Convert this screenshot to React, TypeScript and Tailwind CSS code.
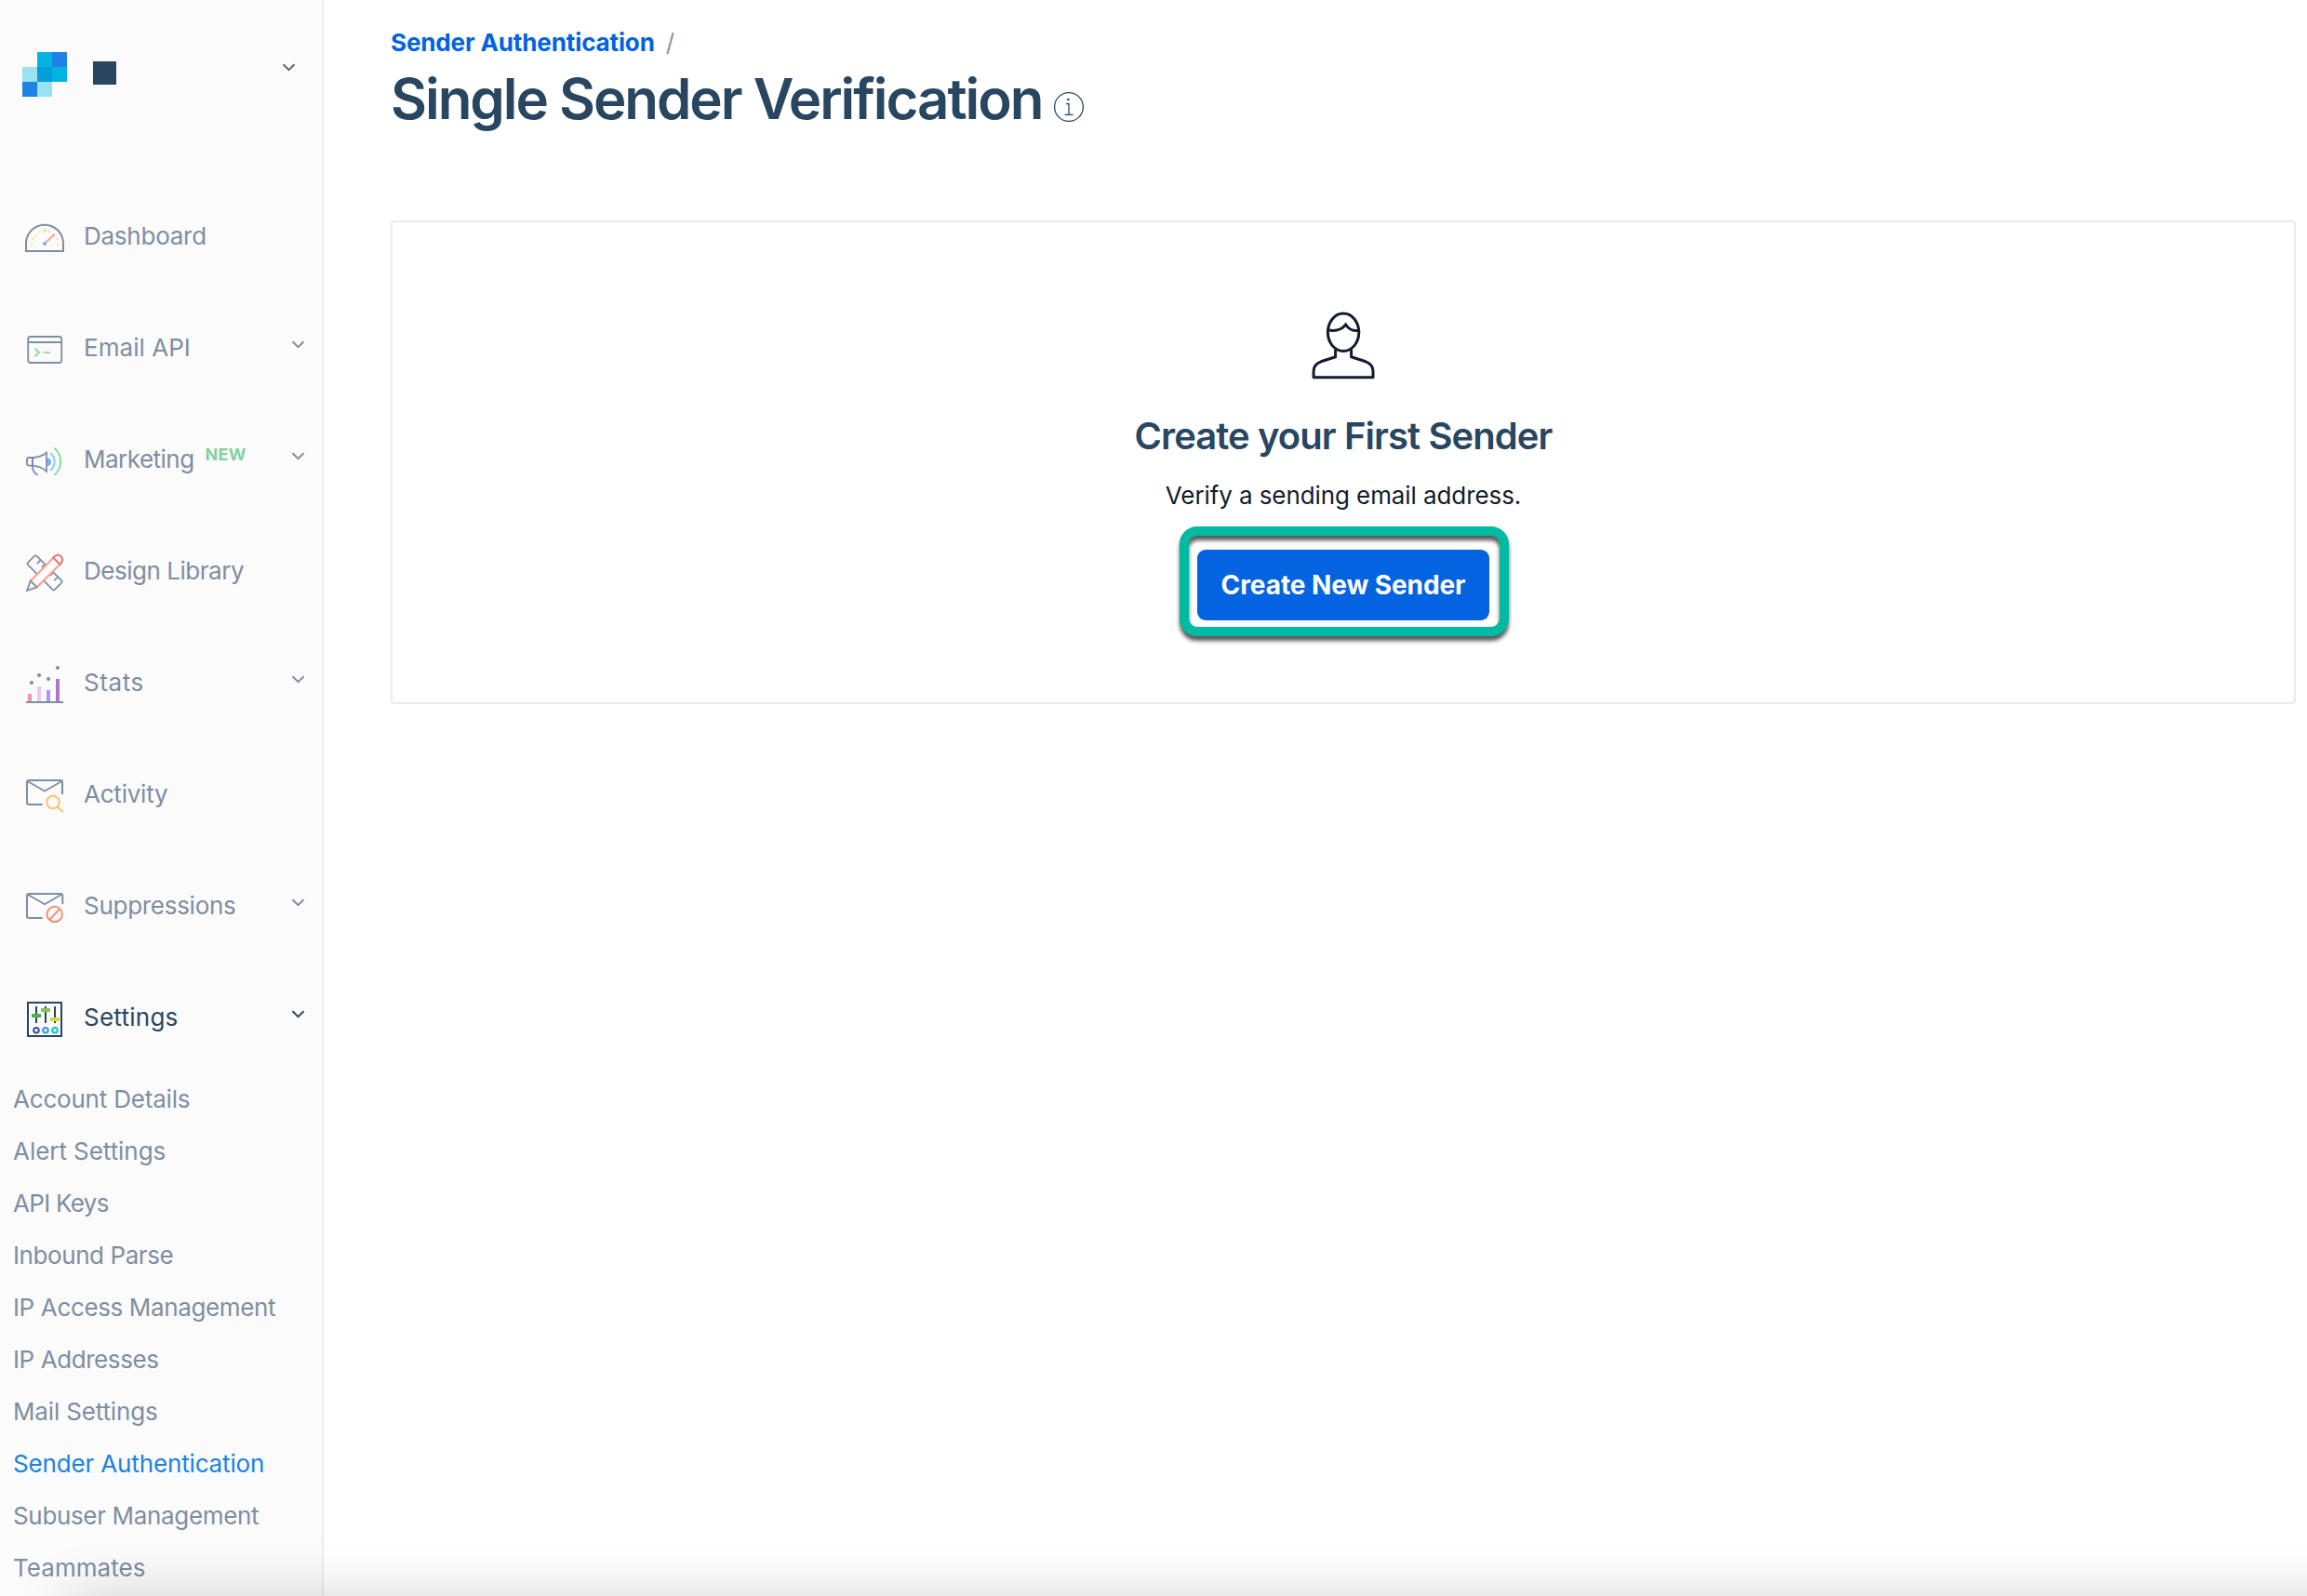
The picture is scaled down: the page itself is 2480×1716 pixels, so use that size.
import type { ReactNode } from "react";

const slate = "#7e8ea2";
const navy = "#294661";

function IconBox({ children }: { children: ReactNode }) {
  return (
    <svg className="size-12 shrink-0" viewBox="0 0 48 48" fill="none" strokeWidth="2">
      {children}
    </svg>
  );
}

function DashboardIcon() {
  return (
    <IconBox>
      <path d="M4 40V31.7A20 20 0 0 1 44 31.7V40Z" stroke={slate} />
      <g fill="#fbe38e">
        <ellipse cx="10" cy="33" rx="1.8" ry="1.1" />
        <ellipse cx="38" cy="33" rx="1.8" ry="1.1" />
        <circle cx="11" cy="27" r="1.1" />
        <circle cx="15" cy="23" r="1.1" />
        <circle cx="19" cy="19" r="1.1" />
        <circle cx="24" cy="18" r="2.1" />
        <circle cx="29" cy="19" r="1.1" />
        <circle cx="37" cy="27" r="1.1" />
      </g>
      <path d="M25.3 30.7L34.7 21.7" stroke="#ff9f88" />
      <circle cx="24" cy="32" r="2.1" fill="#72b2f4" />
    </IconBox>
  );
}

function TerminalIcon() {
  return (
    <IconBox>
      <rect x="6.2" y="12" width="36" height="28" rx="2.5" stroke={slate} strokeWidth="1.8" />
      <path d="M6 18H42" stroke={slate} />
      <path d="M13.4 24.8L18 29L13.4 33.2" stroke="#85dfa2" />
      <path d="M22.5 29H30" stroke="#b4da8d" />
    </IconBox>
  );
}

function MegaphoneIcon() {
  return (
    <IconBox>
      <path d="M11 31C11 36 12.5 39 16.8 40.6" stroke="#8f8bd0" />
      <path d="M27 23A3.7 3.7 0 0 1 27 30.4Z" fill="#72b2f4" stroke="#72b2f4" strokeWidth="1" />
      <path
        d="M11 22H7Q5 22 5 24V28.6Q5 30.6 7 30.6H11M11 22C16 22 21.5 20.3 26 16.8V36.8C21.5 32.6 16 31 11 30.6"
        stroke={slate}
        strokeWidth="1.8"
      />
      <path d="M11 22V31" stroke="#8088b6" />
      <path d="M30 17.2C36.2 21.5 36.2 31.5 30 35.8" stroke="#7dd4e8" />
      <path d="M34.3 11.8C43.4 18.8 43.4 33.8 34.3 40.8" stroke="#85dfa2" />
    </IconBox>
  );
}

function DesignIcon() {
  return (
    <IconBox>
      <path
        d="M13 7.9Q14.3 6.7 15.5 7.9L42.2 34.2Q43.3 35.4 42.2 36.6L35 43.8Q33.7 45 32.5 43.8L5.9 17.2Q4.8 16 5.9 14.9Z"
        stroke={slate}
        strokeWidth="1.7"
      />
      <path d="M19.5 12.3L15.8 16.2M24 16.8L20.8 20M32.8 25.8L29.6 29.2M38 30.6L34.2 34.2" stroke={slate} strokeWidth="1.7" />
      <path d="M8.7 34.7L33.3 9.7L40.3 16.9L15.7 41.3Z" fill="#fbfbfb" stroke="#ff9f88" />
      <path d="M8.7 34.7L5 45L15.7 41.3Z" fill="#fbfbfb" stroke={slate} strokeWidth="1.8" />
      <path d="M33.3 9.5C36 6.2 39.4 5.9 41.6 8.1C43.9 10.5 43.5 13.8 40.5 16.9Z" fill="#fbfbfb" stroke="#d57c78" />
    </IconBox>
  );
}

function StatsIcon() {
  return (
    <IconBox>
      <rect x="6" y="36" width="4" height="8" fill="#ff8fb3" />
      <rect x="16" y="28" width="4" height="16" fill="#ebc8f0" />
      <rect x="26" y="32" width="4" height="12" fill="#b093ff" />
      <rect x="36" y="20" width="4" height="24" fill="#ae78c8" />
      <rect x="4" y="44" width="40" height="2" fill={slate} />
      <g fill={slate}>
        <circle cx="10" cy="24" r="2.1" />
        <circle cx="18" cy="16" r="2.1" />
        <circle cx="28" cy="20" r="2.1" />
        <circle cx="38" cy="8" r="2.1" />
      </g>
    </IconBox>
  );
}

function ActivityIcon() {
  return (
    <IconBox>
      <path d="M21.7 35H7Q5 35 5 33V11Q5 9 7 9H41Q43 9 43 11V24" stroke={slate} />
      <path d="M5.5 10L24 20.5L42.5 10" stroke={slate} strokeWidth="1.8" />
      <circle cx="33" cy="32.4" r="6.8" stroke="#ffc070" />
      <path d="M38 37.5L43.8 43.2" stroke="#ffc070" />
    </IconBox>
  );
}

function SuppressionsIcon() {
  return (
    <IconBox>
      <path d="M21.7 37H7Q5 37 5 35V13Q5 11 7 11H41Q43.3 11 43.3 13V22" stroke={slate} />
      <path d="M5.5 11.5L24 22.2L42.5 11.5" stroke={slate} strokeWidth="1.8" />
      <circle cx="34.7" cy="33" r="8.2" stroke="#f39079" />
      <path d="M29 39L40.5 27" stroke="#f39079" />
    </IconBox>
  );
}

function SettingsIcon() {
  return (
    <IconBox>
      <rect x="6" y="8" width="36" height="36" stroke={navy} />
      <path d="M15 12V30M25 12V30M35 12V30" stroke={navy} />
      <rect x="10" y="20" width="10" height="4" fill="#4caf50" />
      <rect x="20" y="14" width="10" height="4" fill="#8bc34a" />
      <rect x="30" y="24" width="10" height="4" fill="#cddc39" />
      <circle cx="15" cy="37.7" r="2.8" stroke="#3f4aa8" />
      <circle cx="25" cy="37.7" r="2.8" stroke="#2f98f5" />
      <circle cx="35" cy="37.7" r="2.8" stroke="#12bfd6" />
    </IconBox>
  );
}

function Chevron({ className }: { className: string }) {
  return (
    <svg className={className} width="15" height="9" viewBox="0 0 15 9" fill="none" stroke="currentColor" strokeWidth="2">
      <path d="M1.5 1.2L7.5 7.2L13.5 1.2" />
    </svg>
  );
}

type NavItem = { label: string; icon: ReactNode; tracking: string; menu?: boolean; badge?: string; active?: boolean };

const nav: NavItem[] = [
  { label: "Dashboard", icon: <DashboardIcon />, tracking: "tracking-[-0.25px]" },
  { label: "Email API", icon: <TerminalIcon />, tracking: "tracking-[0.05px]", menu: true },
  { label: "Marketing", icon: <MegaphoneIcon />, tracking: "tracking-[-0.52px]", menu: true, badge: "NEW" },
  { label: "Design Library", icon: <DesignIcon />, tracking: "tracking-[-0.47px]" },
  { label: "Stats", icon: <StatsIcon />, tracking: "tracking-[0.6px]", menu: true },
  { label: "Activity", icon: <ActivityIcon />, tracking: "tracking-[-0.22px]" },
  { label: "Suppressions", icon: <SuppressionsIcon />, tracking: "tracking-[-0.28px]", menu: true },
  { label: "Settings", icon: <SettingsIcon />, tracking: "tracking-[0.25px]", menu: true, active: true },
];

const settingsLinks = [
  { label: "Account Details", tracking: "tracking-[-0.2px]" },
  { label: "Alert Settings", tracking: "tracking-[-0.05px]" },
  { label: "API Keys", tracking: "tracking-[-0.7px]" },
  { label: "Inbound Parse", tracking: "tracking-[-0.42px]" },
  { label: "IP Access Management", tracking: "tracking-[-0.36px]" },
  { label: "IP Addresses", tracking: "tracking-[-0.42px]" },
  { label: "Mail Settings", tracking: "tracking-[-0.15px]" },
  { label: "Sender Authentication", tracking: "tracking-[-0.15px]", active: true },
  { label: "Subuser Management", tracking: "tracking-[-0.34px]" },
  { label: "Teammates", tracking: "tracking-[0.05px]" },
];

function Sidebar() {
  return (
    <aside className="flex w-[348px] shrink-0 flex-col border-r-2 border-[#ebecf0] bg-[#fbfbfb] text-[26px]">
      <div className="flex h-[194px] shrink-0 items-start pt-14 pr-7 pl-6">
        <svg className="size-12" viewBox="0 0 3 3" shapeRendering="crispEdges">
          <rect x="1" width="1" height="1" fill="#05b3e3" />
          <rect x="2" width="1" height="1" fill="#1f82e5" />
          <rect y="1" width="1" height="1" fill="#9ae1f4" />
          <rect x="1" y="1" width="1" height="1" fill="#059ed9" />
          <rect x="2" y="1" width="1" height="1" fill="#05b3e3" />
          <rect y="2" width="1" height="1" fill="#1f82e5" />
          <rect x="1" y="2" width="1" height="1" fill="#9ae1f4" />
        </svg>
        <span className="mt-2.5 ml-7 size-[25px] bg-[#294661]" />
        <Chevron className="mt-3 ml-auto text-[#546b81]" />
      </div>
      <nav className="flex shrink-0 flex-col">
        {nav.map((item) => (
          <a
            key={item.label}
            className={`flex h-[120px] items-center pr-[18px] pl-6 ${item.active ? "text-[#294661]" : "text-[#7e8ea2]"}`}
          >
            {item.icon}
            <span className={`mb-px ml-[18px] ${item.tracking}`}>{item.label}</span>
            {item.badge && (
              <span className="mb-3 ml-3 text-[18px] font-bold tracking-[0.3px] text-[#86d0a0]">{item.badge}</span>
            )}
            {item.menu && <Chevron className="mb-[7px] ml-auto" />}
          </a>
        ))}
      </nav>
      <ul className="flex shrink-0 flex-col">
        {settingsLinks.map((link) => (
          <li
            key={link.label}
            className={`h-14 pl-3.5 leading-[55px] ${link.tracking} ${link.active ? "text-[#1a82e2]" : "text-[#7e8ea2]"}`}
          >
            {link.label}
          </li>
        ))}
      </ul>
    </aside>
  );
}

function InfoIcon() {
  return (
    <svg
      className="mt-7 ml-auto size-[34px] shrink-0"
      viewBox="0 0 34 34"
      fill="none"
      stroke="#294661"
      strokeWidth="1.3"
    >
      <circle cx="17" cy="17" r="15.4" />
      <circle cx="16.3" cy="9" r="1.3" fill="#294661" stroke="none" />
      <path d="M14 13.7H17V25.4M12.6 25.4H21.6" />
    </svg>
  );
}

function PersonIcon() {
  return (
    <svg className="h-[76px] w-[72px]" viewBox="0 0 72 76" fill="none" stroke="#121c2d" strokeWidth="3">
      <ellipse cx="36.1" cy="23.3" rx="16.7" ry="20.2" />
      <path d="M19.7 20.8C27 22.6 34.4 20.4 38.7 15C42 20 46 22.6 52.7 21.2" />
      <path
        d="M27.6 42V49.8L12 54.8C6 57 4.1 61 4.1 65V71.7H68V65C68 61 66 57 60.2 54.8L44.6 49.8V42"
        strokeLinejoin="round"
      />
    </svg>
  );
}

export default function App() {
  return (
    <div className="relative flex h-[1716px] w-[2480px] overflow-hidden bg-white font-['Inter',sans-serif]">
      <Sidebar />
      <main className="flex-1 pt-[29px] pr-3 pl-[72px]">
        <div className="flex h-8 items-center text-[26px]">
          <a className="font-bold tracking-[-0.12px] text-[#0263e0]">Sender Authentication</a>
          <span className="ml-3 text-[#949494]">/</span>
        </div>
        <div className="mt-[9px] flex h-[72px] w-[746px] items-start">
          <h1 className="text-[60px] leading-[72px] font-semibold tracking-[-2.05px] whitespace-nowrap text-[#294661]">
            Single Sender Verification
          </h1>
          <InfoIcon />
        </div>
        <section className="mt-[95px] flex h-[520px] flex-col items-center rounded border-2 border-[#e7ecf0] pt-[95px]">
          <PersonIcon />
          <h2 className="mt-[35px] text-[40px] leading-[48px] font-semibold tracking-[-0.93px] text-[#294661]">
            Create your First Sender
          </h2>
          <p className="mt-5 text-[26px] leading-10 tracking-[-0.09px] text-[#121c2d]">Verify a sending email address.</p>
          <div className="relative mt-[38px]">
            <button className="h-[76px] w-[314px] rounded-[9px] bg-[#0463e0] text-[28px] font-bold tracking-[-0.08px] text-white">
              Create New Sender
            </button>
            <div className="pointer-events-none absolute -top-[25px] -right-[21px] -bottom-[17px] -left-[19px] rounded-[19px] border-10 border-[#00bba2] drop-shadow-[0_5px_2px_rgba(0,0,0,0.65)]" />
          </div>
        </section>
      </main>
      <div className="pointer-events-none absolute top-full -right-24 left-[75px] h-24 shadow-[0_0_60px_rgba(0,0,0,0.17)]" />
    </div>
  );
}
